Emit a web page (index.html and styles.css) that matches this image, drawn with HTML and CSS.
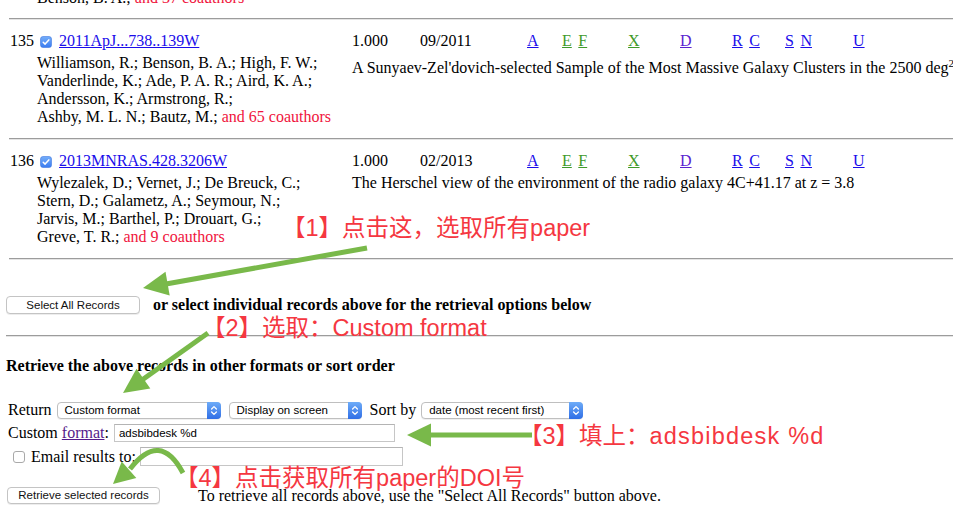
FILE: index.html
```html
<!DOCTYPE html>
<html lang="zh">
<head>
<meta charset="utf-8">
<title>ADS records</title>
<link rel="stylesheet" href="styles.css">
</head>
<body>
<div class="page">
  <div class="prev-tail">Benson, B. A.; <span class="more">and 37 coauthors</span></div>
  <div class="rule"></div>

  <div class="record">
    <div class="rec-head">
      <span class="num">135</span>
      <span class="cb"><svg width="12" height="12" viewBox="0 0 12 12"><defs><linearGradient id="g1" x1="0" y1="0" x2="0" y2="1"><stop offset="0" stop-color="#74aefa"/><stop offset="1" stop-color="#3b7cf0"/></linearGradient></defs><rect x="0.5" y="0.5" width="11" height="11" rx="2.5" fill="url(#g1)" stroke="#3f79e0" stroke-width="0.6"/><path d="M3.2 6.2 L5.1 8.1 L8.8 3.9" fill="none" stroke="#fff" stroke-width="1.5" stroke-linecap="round" stroke-linejoin="round"/></svg></span>
      <a class="bib" href="#">2011ApJ...738..139W</a>
    </div>
    <div class="rec-meta">
      <span class="score">1.000</span><span class="date">09/2011</span>
      <div class="letters">
        <span class="grp"><a class="lk" href="#">A</a></span>
        <span class="grp"><a class="lk green" href="#">E</a><a class="lk green" href="#">F</a></span>
        <span class="grp"><a class="lk green" href="#">X</a></span>
        <span class="grp"><a class="lk violet" href="#">D</a></span>
        <span class="grp"><a class="lk" href="#">R</a><a class="lk" href="#">C</a></span>
        <span class="grp"><a class="lk" href="#">S</a><a class="lk" href="#">N</a></span>
        <span class="grp"><a class="lk" href="#">U</a></span>
      </div>
    </div>
    <div class="authors">Williamson, R.; Benson, B. A.; High, F. W.;<br>Vanderlinde, K.; Ade, P. A. R.; Aird, K. A.;<br>Andersson, K.; Armstrong, R.;<br>Ashby, M. L. N.; Bautz, M.; <span class="more">and 65 coauthors</span></div>
    <div class="title">A Sunyaev-Zel'dovich-selected Sample of the Most Massive Galaxy Clusters in the 2500 deg<sup>2</sup></div>
  </div>
  <div class="rule"></div>

  <div class="record">
    <div class="rec-head">
      <span class="num">136</span>
      <span class="cb"><svg width="12" height="12" viewBox="0 0 12 12"><defs><linearGradient id="g2" x1="0" y1="0" x2="0" y2="1"><stop offset="0" stop-color="#74aefa"/><stop offset="1" stop-color="#3b7cf0"/></linearGradient></defs><rect x="0.5" y="0.5" width="11" height="11" rx="2.5" fill="url(#g2)" stroke="#3f79e0" stroke-width="0.6"/><path d="M3.2 6.2 L5.1 8.1 L8.8 3.9" fill="none" stroke="#fff" stroke-width="1.5" stroke-linecap="round" stroke-linejoin="round"/></svg></span>
      <a class="bib" href="#">2013MNRAS.428.3206W</a>
    </div>
    <div class="rec-meta">
      <span class="score">1.000</span><span class="date">02/2013</span>
      <div class="letters">
        <span class="grp"><a class="lk" href="#">A</a></span>
        <span class="grp"><a class="lk green" href="#">E</a><a class="lk green" href="#">F</a></span>
        <span class="grp"><a class="lk green" href="#">X</a></span>
        <span class="grp"><a class="lk violet" href="#">D</a></span>
        <span class="grp"><a class="lk" href="#">R</a><a class="lk" href="#">C</a></span>
        <span class="grp"><a class="lk" href="#">S</a><a class="lk" href="#">N</a></span>
        <span class="grp"><a class="lk" href="#">U</a></span>
      </div>
    </div>
    <div class="authors">Wylezalek, D.; Vernet, J.; De Breuck, C.;<br>Stern, D.; Galametz, A.; Seymour, N.;<br>Jarvis, M.; Barthel, P.; Drouart, G.;<br>Greve, T. R.; <span class="more">and 9 coauthors</span></div>
    <div class="title">The Herschel view of the environment of the radio galaxy 4C+41.17 at z = 3.8</div>
  </div>
  <div class="rule"></div>

  <div class="selbar">
    <button class="btn btn-all" type="button">Select All Records</button>
    <span class="selbar-text">or select individual records above for the retrieval options below</span>
  </div>
  <div class="rule wide"></div>

  <div class="heading">Retrieve the above records in other formats or sort order</div>

  <div class="form-row row-return">
    <span>Return</span>
    <div class="select sel-format"><span class="val">Custom format</span><span class="stepper"><svg width="14" height="17" viewBox="0 0 14 17"><path d="M4.6 7 L7 4.6 L9.4 7 M4.6 10 L7 12.4 L9.4 10" fill="none" stroke="#fff" stroke-width="1.3" stroke-linecap="round" stroke-linejoin="round"/></svg></span></div>
    <div class="select sel-display"><span class="val">Display on screen</span><span class="stepper"><svg width="14" height="17" viewBox="0 0 14 17"><path d="M4.6 7 L7 4.6 L9.4 7 M4.6 10 L7 12.4 L9.4 10" fill="none" stroke="#fff" stroke-width="1.3" stroke-linecap="round" stroke-linejoin="round"/></svg></span></div>
    <span class="sortby">Sort by</span>
    <div class="select sel-sort"><span class="val">date (most recent first)</span><span class="stepper"><svg width="14" height="17" viewBox="0 0 14 17"><path d="M4.6 7 L7 4.6 L9.4 7 M4.6 10 L7 12.4 L9.4 10" fill="none" stroke="#fff" stroke-width="1.3" stroke-linecap="round" stroke-linejoin="round"/></svg></span></div>
  </div>

  <div class="form-row row-custom">
    <span>Custom <a class="fmt" href="#">format</a>:</span>
    <input class="field field-custom" type="text" value="adsbibdesk %d">
  </div>

  <div class="form-row row-email">
    <input class="chk" type="checkbox">
    <span class="email-label">Email results to:</span>
    <input class="field field-email" type="text" value="">
  </div>

  <div class="form-row row-submit">
    <button class="btn btn-retrieve" type="button">Retrieve selected records</button>
    <span class="hint">To retrieve all records above, use the "Select All Records" button above.</span>
  </div>
</div>

<div class="notes">
  <svg class="arrows" width="953" height="520" viewBox="0 0 953 520">
    <g fill="#79b94a" stroke="#79b94a">
      <line x1="367" y1="248" x2="166" y2="284" stroke-width="5"/>
      <polygon points="143,288 165.5,271.8 169.7,295.4" stroke="none"/>
      <line x1="208" y1="333" x2="142" y2="380" stroke-width="5"/>
      <polygon points="123,393 136.5,368.8 150.3,388.4" stroke="none"/>
      <line x1="532" y1="435" x2="429" y2="435" stroke-width="5"/>
      <polygon points="407,435 431,423.5 431,446.5" stroke="none"/>
      <path d="M183 473 Q160 430 130 469" fill="none" stroke-width="5"/>
      <polygon points="113,484 121.7,461.5 136.3,477.9" stroke="none"/>
    </g>
  </svg>
  <div class="note note-1">【1】点击这，选取所有paper</div>
  <div class="note note-2">【2】选取：Custom format</div>
  <div class="note note-3">【3】填上：<span class="wide-latin">adsbibdesk %d</span></div>
  <div class="note note-4">【4】点击获取所有paper的DOI号</div>
</div>
</body>
</html>
```

FILE: styles.css
```css
* { box-sizing: border-box; }
html, body { margin: 0; padding: 0; }
body {
  width: 953px;
  height: 520px;
  overflow: hidden;
  background: #fff;
  color: #000;
  font-family: "Liberation Serif", "Times New Roman", serif;
  font-size: 16px;
  line-height: 18px;
  position: relative;
}
.page { padding-top: 1px; margin-top: -1px; }
.prev-tail { margin-top: -11px; padding: 0 0 11px 37px; }
.more { color: #f0143c; }

.rule {
  border-top: 1px solid #9c9c9c;
  border-bottom: 1px solid #e4e4e4;
  margin-left: 9px;
}
.rule.wide { margin-left: 6px; margin-top: 21px; }

.record {
  display: grid;
  grid-template-columns: 342px 1fr;
  row-gap: 4px;
  padding: 12px 0 12px 10px;
}
.rec-head { display: flex; align-items: center; height: 18px; }
.cb { display: inline-flex; margin: 1px 7px 0 6px; }
.bib { color: #1a0dea; text-decoration: underline; }
.rec-meta { display: flex; height: 18px; }
.score { width: 68px; }
.date { width: 107px; }
.letters {
  display: grid;
  grid-template-columns: 35px 66px 52px 52px 53px 68px auto;
}
.grp { display: flex; gap: 6.5px; }
.lk { color: #1a0dea; text-decoration: underline; }
.lk.green { color: #3f9a2a; }
.lk.violet { color: #5a23cf; }
.authors { padding-left: 27px; }
.title { white-space: nowrap; }
.title sup { font-size: 11px; line-height: 18px; vertical-align: 6px; }

/* form area */
.selbar {
  display: flex;
  align-items: center;
  margin-top: 36px;
  padding-left: 6px;
  height: 18px;
}
.btn {
  height: 18px;
  padding: 0;
  margin: 0;
  border: 1px solid #c4c4c4;
  border-radius: 4px;
  background: #fff;
  color: #111;
  font-family: "Liberation Sans", Arial, sans-serif;
  font-size: 11.5px;
  line-height: 16px;
  box-shadow: 0 1px 0 rgba(0, 0, 0, 0.07);
}
.btn-all { width: 134px; }
.selbar-text { margin-left: 13px; font-weight: bold; }

.heading { margin-top: 20px; padding-left: 6px; font-weight: bold; }

.form-row { display: flex; align-items: center; padding-left: 8px; }
.row-return { margin-top: 26px; height: 18px; }
.row-custom { margin-top: 5px; height: 18px; }
.row-email { margin-top: 5px; height: 19px; }
.row-submit { margin-top: 21px; height: 17px; padding-left: 7px; }

.select {
  display: flex;
  height: 17px;
  border: 1px solid #bfbfbf;
  border-radius: 4px;
  background: #fff;
  font-family: "Liberation Sans", Arial, sans-serif;
  font-size: 11.5px;
  line-height: 15px;
  box-shadow: 0 1px 0 rgba(0, 0, 0, 0.06);
}
.select .val { flex: 1; padding-left: 7px; white-space: nowrap; overflow: hidden; }
.select .stepper {
  width: 14px;
  margin: -1px -1px -1px 0;
  border-radius: 0 4px 4px 0;
  background: linear-gradient(#6eacf8, #2f6ee6);
  display: flex;
}
.sel-format { width: 164px; margin-left: 5px; }
.sel-display { width: 133px; margin-left: 8px; }
.sortby { margin-left: 8px; }
.sel-sort { width: 162px; margin-left: 5px; }

.fmt { color: #551a8b; text-decoration: underline; }
.field {
  margin: 0;
  border: 1px solid #c6c6c6;
  border-top-color: #b4b4b4;
  border-radius: 0;
  background: #fff;
  font-family: "Liberation Sans", Arial, sans-serif;
  font-size: 11.5px;
  padding: 0 4px;
  color: #000;
  outline: none;
}
.field-custom { width: 281px; height: 18px; margin-left: 5px; }
.field-email { width: 263px; height: 19px; margin-left: 4px; }
.chk {
  appearance: none;
  -webkit-appearance: none;
  width: 12px;
  height: 12px;
  margin: 0 0 0 5px;
  border: 1px solid #a9a9a9;
  border-radius: 3px;
  background: #fff;
}
.email-label { margin-left: 6px; }
.btn-retrieve { width: 153px; height: 17px; line-height: 15px; }
.hint { margin-left: 38px; }

/* annotation overlay */
.notes { position: absolute; left: 0; top: 0; width: 953px; height: 520px; pointer-events: none; }
.arrows { position: absolute; left: 0; top: 0; }
.note {
  position: absolute;
  white-space: nowrap;
  color: #f53741;
  font-family: "Liberation Sans", "Noto Sans CJK SC", sans-serif;
  font-size: 23.5px;
  line-height: 24px;
}
.wide-latin { letter-spacing: 1.2px; }
.note-1 { left: 282px; top: 216px; }
.note-2 { left: 202px; top: 316px; }
.note-3 { left: 519px; top: 424px; }
.note-4 { left: 175px; top: 466px; }
```
